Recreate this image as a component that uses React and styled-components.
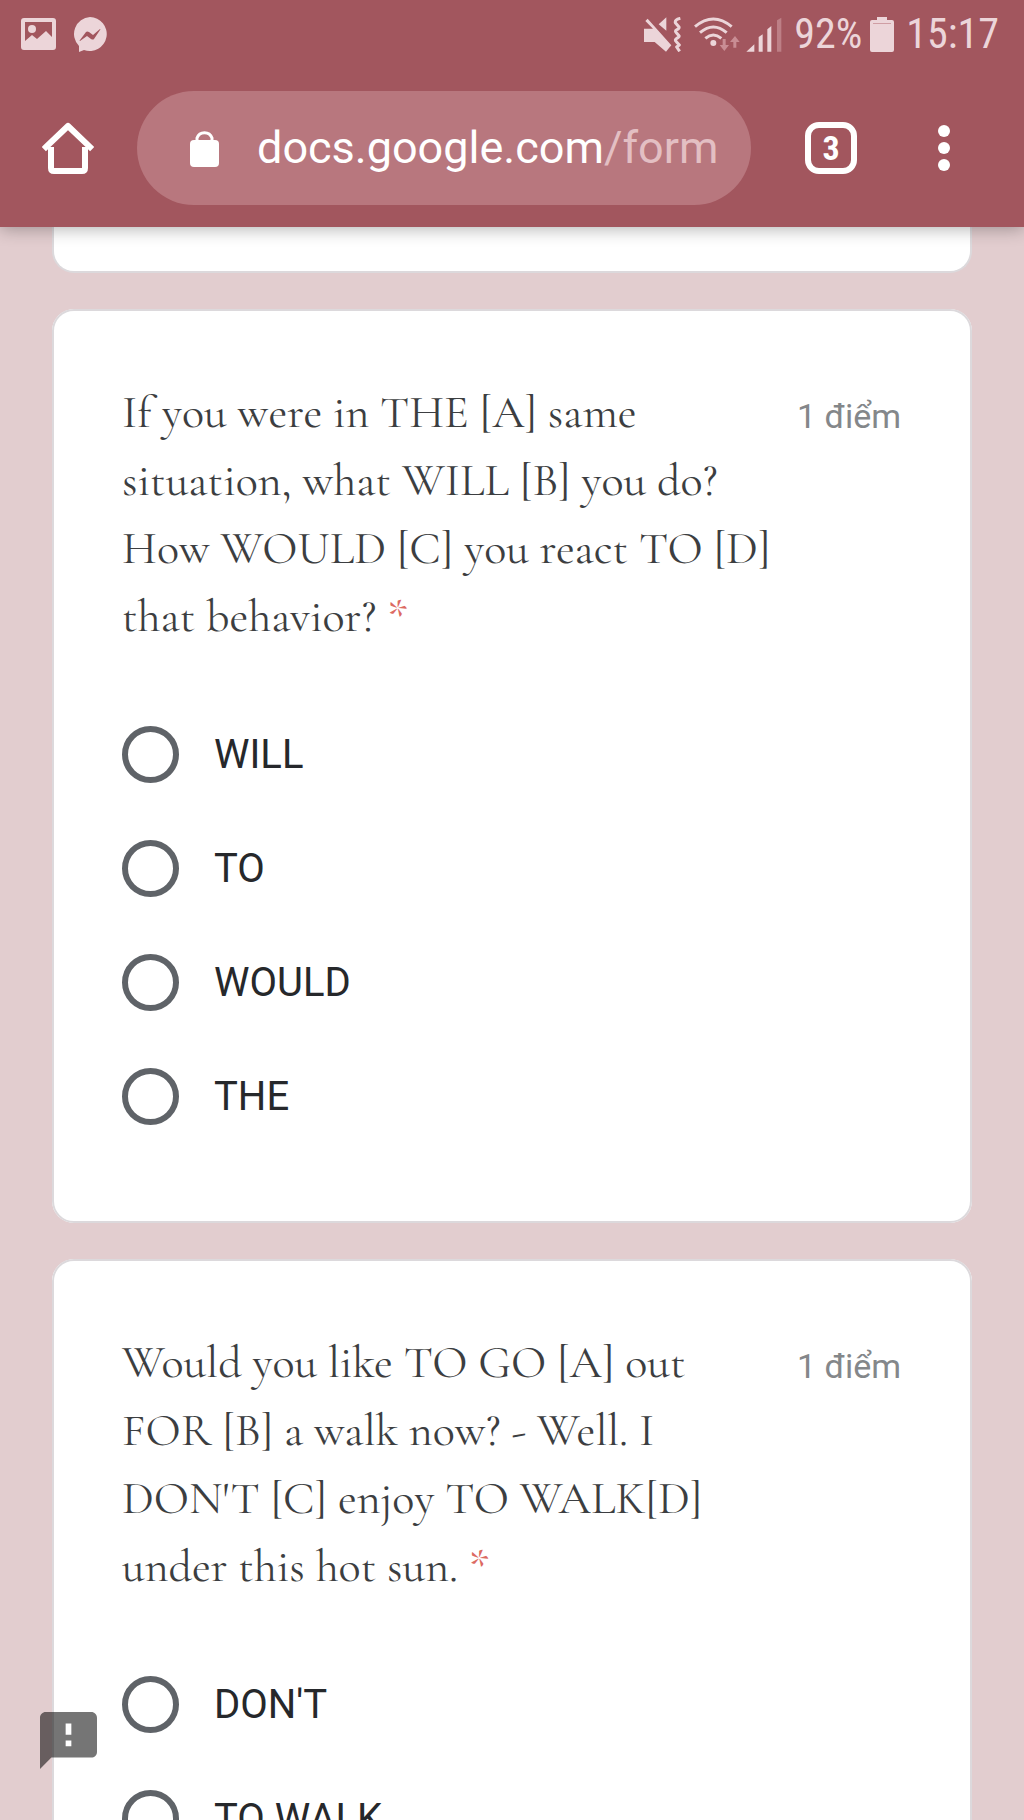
import React, { useState } from 'react';
import styled, { createGlobalStyle } from 'styled-components';

const GlobalStyle = createGlobalStyle`
  * {
    box-sizing: border-box;
  }

  body {
    margin: 0;
    background-color: #e2cdcf;
    font-family: Roboto, "Liberation Sans", sans-serif;
  }

  button {
    border: none;
    padding: 0;
    background: none;
    color: inherit;
    font-family: inherit;
    cursor: pointer;
  }
`;

const Phone = styled.div`
  display: flex;
  flex-direction: column;
  height: 100vh;
`;

const Header = styled.header`
  flex: none;
  z-index: 1;
  background-color: #a2565e;
  color: white;
  box-shadow: 0 2px 16px rgba(0, 0, 0, 0.3);
`;

const StatusBar = styled.div`
  display: flex;
  align-items: center;
  justify-content: space-between;
  height: 68px;
  padding: 0 25px 0 21px;
  color: #ecd5d9;
`;

const StatusGroup = styled.div`
  display: flex;
  align-items: center;
  gap: ${props => props.$gap}px;
`;

const StatusText = styled.span`
  font-family: "Roboto Condensed", Roboto, sans-serif;
  font-size: 42px;
  line-height: 48px;
`;

const Toolbar = styled.nav`
  display: flex;
  align-items: center;
  height: 159px;
  padding: 0 54px 0 42px;
`;

const IconButton = styled.button`
  display: flex;
  align-items: center;
  justify-content: center;
  flex: none;
  width: 52px;
  height: 52px;
`;

const TabsButton = styled(IconButton)`
  margin-right: 61px;
  border: 6px solid white;
  border-radius: 14px;
  font-family: "Roboto Condensed", Roboto, sans-serif;
  font-size: 34px;
  font-weight: 700;
`;

const AddressBar = styled.button`
  display: flex;
  align-items: center;
  gap: 38px;
  flex: 1;
  min-width: 0;
  height: 114px;
  margin: 0 54px 0 43px;
  padding: 0 28px 0 53px;
  border-radius: 57px;
  background-color: #b8777e;
  overflow: hidden;
`;

const Url = styled.span`
  font-size: 45px;
  line-height: 56px;
  white-space: nowrap;
`;

const UrlPath = styled.span`
  color: #e3bfc3;
`;

const Form = styled.form`
  flex: 1;
  display: flex;
  flex-direction: column;
  gap: 36px;
  min-height: 0;
  padding: 0 52px;
  overflow-y: auto;
  scrollbar-width: none;
`;

const Card = styled.fieldset`
  flex: none;
  min-width: 0;
  margin: 0;
  padding: 67px 69px 96px 68px;
  border: 2px solid #dcd9dc;
  border-radius: 22px;
  background-color: white;
`;

const CardEnd = styled.div`
  flex: none;
  height: 46px;
  border: 2px solid #dcd9dc;
  border-top: none;
  border-radius: 0 0 22px 22px;
  background-color: white;
`;

const QuestionHead = styled.div`
  display: flex;
  justify-content: space-between;
  gap: 24px;
  margin-bottom: 76px;
`;

const QuestionTitle = styled.h2`
  margin: 0;
  font-family: "Cormorant Garamond", "Liberation Serif", serif;
  font-size: 46px;
  line-height: 68px;
  font-weight: 400;
  color: #3c3e41;
  white-space: pre-line;
`;

const Required = styled.span`
  color: #dc6a62;
`;

const Points = styled.p`
  flex: none;
  margin: 0;
  padding-top: 4px;
  font-size: 34px;
  line-height: 68px;
  color: #84878a;
`;

const Options = styled.div`
  display: flex;
  flex-direction: column;
  gap: 57px;
`;

const OptionLabel = styled.label`
  display: flex;
  align-items: center;
  gap: 35px;
  height: 57px;
  font-size: 40px;
  color: #26282b;
  cursor: pointer;
`;

const Radio = styled.input`
  appearance: none;
  flex: none;
  width: 57px;
  height: 57px;
  margin: 0;
  border: 6px solid #5f6368;
  border-radius: 50%;

  &:checked {
    border-color: #a2565e;
    background: radial-gradient(#a2565e 50%, transparent 54%);
  }
`;

const ReportButton = styled.button`
  position: fixed;
  left: 40px;
  bottom: 51px;
  display: flex;
  color: rgba(0, 0, 0, 0.54);
`;

const questions = [
  {
    id: 'situation',
    title: 'If you were in THE [A] same\nsituation, what WILL [B] you do?\nHow WOULD [C] you react TO [D]\nthat behavior?',
    options: ['WILL', 'TO', 'WOULD', 'THE'],
  },
  {
    id: 'walk',
    title: "Would you like TO GO [A] out\nFOR [B] a walk now? - Well. I\nDON'T [C] enjoy TO WALK[D]\nunder this hot sun.",
    options: ["DON'T", 'TO WALK'],
  },
];

const PictureIcon = () => (
  <svg width="35" height="32" viewBox="0 0 35 32" fill="currentColor" aria-hidden="true">
    <path fillRule="evenodd" d="M3 0h29a3 3 0 0 1 3 3v26a3 3 0 0 1-3 3H3a3 3 0 0 1-3-3V3a3 3 0 0 1 3-3zM4 4v19l7-6 5 4 9-8 6 6V4z"/>
    <circle cx="11" cy="11" r="4"/>
  </svg>
);

const MessengerIcon = () => (
  <svg width="35" height="35" viewBox="0 0 35 35" aria-hidden="true">
    <path fill="currentColor" d="M17 0a17 17 0 1 1-6 33l-5 2v-6A17 17 0 0 1 17 0z"/>
    <path fill="#a2565e" d="M7 23l6-8q1-1 3 0l4 3 7-6q1 0 0 1l-6 9q-1 1-3 0l-4-3-7 5q-1 0 0-1z"/>
  </svg>
);

const MuteIcon = () => (
  <svg width="38" height="35" viewBox="66 50 114 105" aria-hidden="true">
    <path fill="currentColor" d="M66 85h27L70 62l7-7 71 80-7 8-9 11-34-29H66zM110 72l23-21v40z"/>
    <path fill="none" stroke="currentColor" strokeWidth="9" strokeLinejoin="round" d="M175 54q-17 4-15 13l11 13q2 4-8 9-5 3 0 8l8 9q2 4-8 9-6 4 0 9l9 10-8 6 9 13"/>
  </svg>
);

const WifiIcon = () => (
  <svg width="46" height="35" viewBox="220 50 138 105" fill="none" aria-hidden="true">
    <g stroke="currentColor" strokeWidth="9">
      <path d="M223 79q55-46 110 0M238 97q40-34 80 0M254 114q24-20 48 0"/>
    </g>
    <circle cx="278" cy="128" r="9" fill="currentColor"/>
    <g fill="#c98d94">
      <path d="M306 116h9v18h10l-14 18-14-18h9zM338 142h9v-17h10l-14-18-15 18h10z"/>
    </g>
  </svg>
);

const SignalIcon = () => (
  <svg width="36" height="35" viewBox="373 50 108 105" fill="currentColor" aria-hidden="true">
    <path d="M374 154l24-22v22zM411 110l12-8v52h-12zM437 87l12-10v77h-12z"/>
    <path fill="#bd7f86" d="M466 60l13-8v102h-13z"/>
  </svg>
);

const BatteryIcon = () => (
  <svg width="24" height="35" viewBox="0 0 24 35" aria-hidden="true">
    <path fill="currentColor" d="M7 0h10v3h5a2 2 0 0 1 2 2v28a2 2 0 0 1-2 2H2a2 2 0 0 1-2-2V5a2 2 0 0 1 2-2h5z"/>
    <path fill="#cf9ea4" d="M3 6h18v1H3z"/>
  </svg>
);

const HomeIcon = () => (
  <svg width="52" height="52" viewBox="0 0 52 52" fill="none" stroke="currentColor" strokeWidth="6" strokeLinejoin="round" aria-hidden="true">
    <path strokeLinecap="square" d="M4 25L26 4l22 21"/>
    <path d="M9 25v21q0 3 3 3h28q3 0 3-3V25"/>
  </svg>
);

const LockIcon = () => (
  <svg width="29" height="38" viewBox="0 0 29 38" aria-hidden="true">
    <rect y="11" width="29" height="27" rx="4" fill="currentColor"/>
    <path fill="none" stroke="currentColor" strokeWidth="3" d="M7 13V9a8 8 0 0 1 15 0v4"/>
  </svg>
);

const DotsIcon = () => (
  <svg width="12" height="46" viewBox="0 0 12 46" fill="currentColor" aria-hidden="true">
    <circle cx="6" cy="6" r="6"/>
    <circle cx="6" cy="23" r="6"/>
    <circle cx="6" cy="40" r="6"/>
  </svg>
);

const ReportIcon = () => (
  <svg width="57" height="57" viewBox="2 2 20 20" fill="currentColor" aria-hidden="true">
    <path d="M20 2H4c-1.1 0-2 .9-2 2v18l4-4h14c1.1 0 2-.9 2-2V4c0-1.1-.9-2-2-2z"/>
    <path fill="white" d="M11 6h2v4h-2zM11 12h2v2h-2z"/>
  </svg>
);

const Browser = () => (
  <Header>
    <StatusBar>
      <StatusGroup $gap={17}>
        <PictureIcon/>
        <MessengerIcon/>
      </StatusGroup>

      <StatusGroup $gap={12}>
        <MuteIcon/>
        <StatusGroup $gap={6}>
          <WifiIcon/>
          <SignalIcon/>
        </StatusGroup>
        <StatusGroup $gap={8}>
          <StatusText>92%</StatusText>
          <BatteryIcon/>
        </StatusGroup>
        <StatusText>15:17</StatusText>
      </StatusGroup>
    </StatusBar>

    <Toolbar>
      <IconButton type="button" aria-label="Home"><HomeIcon/></IconButton>
      <AddressBar type="button">
        <LockIcon/>
        <Url>docs.google.com<UrlPath>/form</UrlPath></Url>
      </AddressBar>
      <TabsButton type="button">3</TabsButton>
      <IconButton type="button" aria-label="Menu"><DotsIcon/></IconButton>
    </Toolbar>
  </Header>
);

const Question = ({ question, answer, onAnswer }) => (
  <Card aria-labelledby={question.id}>
    <QuestionHead>
      <QuestionTitle id={question.id}>
        {question.title} <Required>*</Required>
      </QuestionTitle>
      <Points>1 điểm</Points>
    </QuestionHead>

    <Options>
      {question.options.map(option => (
        <OptionLabel key={option}>
          <Radio
            type="radio"
            name={question.id}
            checked={answer === option}
            onChange={() => onAnswer(option)}
          />
          {option}
        </OptionLabel>
      ))}
    </Options>
  </Card>
);

const App = () => {
  const [answers, setAnswers] = useState({});

  return (
    <Phone>
      <GlobalStyle/>
      <Browser/>

      <Form>
        <CardEnd/>
        {questions.map(question => (
          <Question
            key={question.id}
            question={question}
            answer={answers[question.id]}
            onAnswer={option => setAnswers({ ...answers, [question.id]: option })}
          />
        ))}
      </Form>

      <ReportButton type="button" aria-label="Report a problem"><ReportIcon/></ReportButton>
    </Phone>
  );
};

export default App;
